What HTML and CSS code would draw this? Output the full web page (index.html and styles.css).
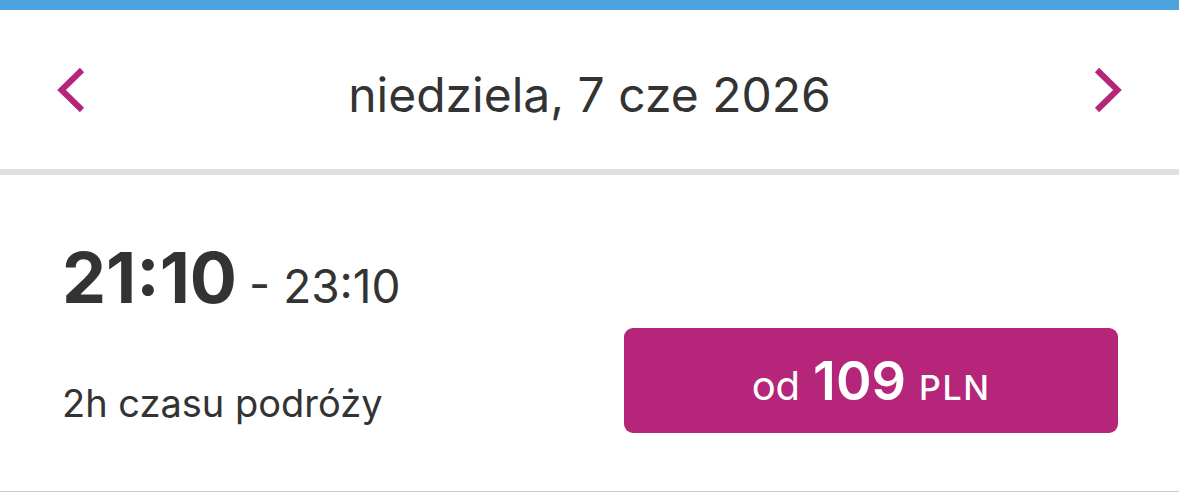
FILE: index.html
```html
<!DOCTYPE html>
<html lang="pl">
<head>
<meta charset="utf-8">
<link rel="stylesheet" href="styles.css">
</head>
<body>
<div class="topbar"></div>
<div class="datebar">
  <button class="nav" aria-label="Poprzedni dzień">
    <svg width="28" height="46" viewBox="0 0 28 46"><polyline points="25,3 4.5,23 25,43" fill="none" stroke="#b5267a" stroke-width="6"/></svg>
  </button>
  <div class="date">niedziela, 7 cze 2026</div>
  <button class="nav" aria-label="Następny dzień">
    <svg width="28" height="46" viewBox="0 0 28 46"><polyline points="3,3 23.5,23 3,43" fill="none" stroke="#b5267a" stroke-width="6"/></svg>
  </button>
</div>
<div class="flight">
  <div class="info">
    <div class="times"><span class="dep">21:10</span><span class="arr">- 23:10</span></div>
    <div class="duration">2h czasu podróży</div>
  </div>
  <button class="price"><span class="od">od</span><span class="amount">109</span><span class="cur">PLN</span></button>
</div>
</body>
</html>
```
FILE: styles.css
```css
* { box-sizing: border-box; }
body {
  margin: 0;
  background: #fff;
  font-family: Inter, "Noto Sans", sans-serif;
  color: #333;
}
.topbar {
  height: 10px;
  background: #4aa3df;
}
.datebar {
  height: 165px;
  border-bottom: 6px solid #e0e0e0;
  display: flex;
  align-items: center;
  justify-content: space-between;
  padding: 0 57px 0 57px;
}
.nav {
  background: none;
  border: 0;
  padding: 0;
  width: 28px;
  height: 46px;
  display: flex;
}
.date {
  font-size: 48px;
  line-height: 48px;
  margin-top: 10px;
  font-weight: 400;
  color: #333;
}
.flight {
  height: 317px;
  border-bottom: 1px solid #c8c8c8;
  display: flex;
  justify-content: space-between;
  padding: 0 61px 0 62px;
}
.info {
  display: flex;
  flex-direction: column;
  padding-top: 68px;
}
.times {
  display: flex;
  align-items: baseline;
  gap: 12px;
}
.dep {
  font-size: 70px;
  font-weight: 700;
  line-height: 70px;
}
.arr {
  font-size: 46px;
  font-weight: 400;
}
.duration {
  margin-top: 66px;
  font-size: 38px;
}
.price {
  margin-top: 153px;
  width: 494px;
  height: 105px;
  border: 0;
  border-radius: 9px;
  background: #b5267a;
  color: #fff;
  font-family: Inter, "Noto Sans", sans-serif;
  display: flex;
  align-items: baseline;
  justify-content: center;
  gap: 13px;
  padding-top: 20px;
}
.od { font-size: 40px; font-weight: 400; }
.amount { font-size: 54px; font-weight: 600; }
.cur { font-size: 34px; font-weight: 500; letter-spacing: 1.5px; }
```
